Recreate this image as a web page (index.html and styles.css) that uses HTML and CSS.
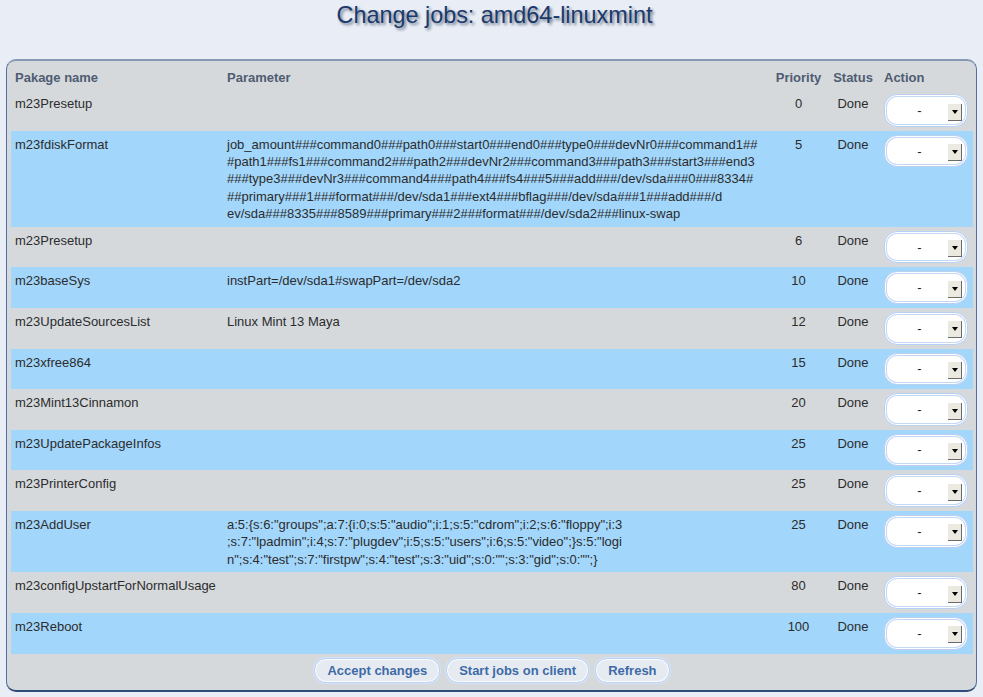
FILE: index.html
```html
<!DOCTYPE html>
<html>
<head>
<meta charset="utf-8">
<link rel="stylesheet" href="styles.css">
</head>
<body>
<h1 class="title">Change jobs: amd64-linuxmint</h1>
<div class="panel">
  <table class="jobs">
    <colgroup>
      <col class="c-name"><col class="c-param"><col class="c-prio"><col class="c-status"><col class="c-action">
    </colgroup>
    <thead>
      <tr><th class="left">Pakage name</th><th class="left">Parameter</th><th>Priority</th><th>Status</th><th class="left">Action</th></tr>
    </thead>
    <tbody>
      <tr class="gray"><td>m23Presetup</td><td class="param"></td><td class="num">0</td><td class="num">Done</td><td><div class="sel"><span class="sel-val">-</span><span class="sel-btn"><span class="tri"></span></span></div></td></tr>
      <tr class="blue"><td>m23fdiskFormat</td><td class="param">job_amount###command0###path0###start0###end0###type0###devNr0###command1##<br>#path1###fs1###command2###path2###devNr2###command3###path3###start3###end3<br>###type3###devNr3###command4###path4###fs4###5###add###/dev/sda###0###8334#<br>##primary###1###format###/dev/sda1###ext4###bflag###/dev/sda###1###add###/d<br>ev/sda###8335###8589###primary###2###format###/dev/sda2###linux-swap</td><td class="num">5</td><td class="num">Done</td><td><div class="sel"><span class="sel-val">-</span><span class="sel-btn"><span class="tri"></span></span></div></td></tr>
      <tr class="gray"><td>m23Presetup</td><td class="param"></td><td class="num">6</td><td class="num">Done</td><td><div class="sel"><span class="sel-val">-</span><span class="sel-btn"><span class="tri"></span></span></div></td></tr>
      <tr class="blue"><td>m23baseSys</td><td class="param">instPart=/dev/sda1#swapPart=/dev/sda2</td><td class="num">10</td><td class="num">Done</td><td><div class="sel"><span class="sel-val">-</span><span class="sel-btn"><span class="tri"></span></span></div></td></tr>
      <tr class="gray"><td>m23UpdateSourcesList</td><td class="param">Linux Mint 13 Maya</td><td class="num">12</td><td class="num">Done</td><td><div class="sel"><span class="sel-val">-</span><span class="sel-btn"><span class="tri"></span></span></div></td></tr>
      <tr class="blue"><td>m23xfree864</td><td class="param"></td><td class="num">15</td><td class="num">Done</td><td><div class="sel"><span class="sel-val">-</span><span class="sel-btn"><span class="tri"></span></span></div></td></tr>
      <tr class="gray"><td>m23Mint13Cinnamon</td><td class="param"></td><td class="num">20</td><td class="num">Done</td><td><div class="sel"><span class="sel-val">-</span><span class="sel-btn"><span class="tri"></span></span></div></td></tr>
      <tr class="blue"><td>m23UpdatePackageInfos</td><td class="param"></td><td class="num">25</td><td class="num">Done</td><td><div class="sel"><span class="sel-val">-</span><span class="sel-btn"><span class="tri"></span></span></div></td></tr>
      <tr class="gray"><td>m23PrinterConfig</td><td class="param"></td><td class="num">25</td><td class="num">Done</td><td><div class="sel"><span class="sel-val">-</span><span class="sel-btn"><span class="tri"></span></span></div></td></tr>
      <tr class="blue"><td>m23AddUser</td><td class="param">a:5:{s:6:"groups";a:7:{i:0;s:5:"audio";i:1;s:5:"cdrom";i:2;s:6:"floppy";i:3<br>;s:7:"lpadmin";i:4;s:7:"plugdev";i:5;s:5:"users";i:6;s:5:"video";}s:5:"logi<br>n";s:4:"test";s:7:"firstpw";s:4:"test";s:3:"uid";s:0:"";s:3:"gid";s:0:"";}</td><td class="num">25</td><td class="num">Done</td><td><div class="sel"><span class="sel-val">-</span><span class="sel-btn"><span class="tri"></span></span></div></td></tr>
      <tr class="gray"><td>m23configUpstartForNormalUsage</td><td class="param"></td><td class="num">80</td><td class="num">Done</td><td><div class="sel"><span class="sel-val">-</span><span class="sel-btn"><span class="tri"></span></span></div></td></tr>
      <tr class="blue"><td>m23Reboot</td><td class="param"></td><td class="num">100</td><td class="num">Done</td><td><div class="sel"><span class="sel-val">-</span><span class="sel-btn"><span class="tri"></span></span></div></td></tr>
    </tbody>
  </table>
  <div class="buttons">
    <span class="btn">Accept changes</span>
    <span class="btn">Start jobs on client</span>
    <span class="btn">Refresh</span>
  </div>
</div>
</body>
</html>
```
FILE: styles.css
```css
html, body {
  margin: 0;
  padding: 0;
  background: #e9eef6;
  font-family: "Liberation Sans", Arial, sans-serif;
}
.title {
  margin: 0;
  padding-top: 2px;
  padding-left: 6px;
  height: 54px;
  box-sizing: border-box;
  text-align: center;
  font-size: 23.4px;
  font-weight: normal;
  line-height: 27px;
  color: #1b3a6b;
  text-shadow: 2px 2px 3px #6f7c8f;
}
.panel {
  margin: 0 6px;
  background: #d6d9dc;
  border: 1px solid #5270a0;
  border-top: 2px solid #8599b6;
  border-bottom: 2px solid #2f4b79;
  border-radius: 10px;
  padding: 4px 3px 7px 4px;
  height: 633px;
  box-sizing: border-box;
  margin-top: 5px;
}
.jobs {
  width: 962px;
  border-collapse: collapse;
  table-layout: fixed;
  font-size: 13px;
  line-height: 17.3px;
  color: #2c2c2c;
}
.c-name { width: 212px; }
.c-param { width: 548px; }
.c-prio { width: 55px; }
.c-status { width: 54px; }
.c-action { width: 93px; }
.jobs th {
  font-weight: bold;
  color: #4e5c72;
  padding: 4px 4px;
  text-align: center;
  white-space: nowrap;
}
.jobs th.left { text-align: left; }
.jobs td {
  padding: 4px 4px;
  vertical-align: top;
  white-space: nowrap;
}
.jobs td.num { text-align: center; padding-top: 5px; }
.jobs td:first-child { padding-top: 5px; }
.jobs td.param { padding-top: 5px; padding-bottom: 4.5px; }
.blue { background: #a2d6fb; }
.gray { background: #d6d9dc; }
.sel {
  display: flex;
  align-items: center;
  width: 84px;
  height: 32.6px;
  box-sizing: border-box;
  background: #fff;
  border: 1px solid #b9d0f3;
  border-radius: 13px;
  box-shadow: inset 0 0 0 1px #fff, inset 0 0 0 2px #c4d8f6;
  padding-right: 5px;
}
.sel-val {
  flex: 1;
  text-align: center;
  font-size: 13px;
  color: #222;
  padding-left: 6px;
}
.sel-btn {
  width: 14px;
  height: 17px;
  margin-top: 3px;
  box-sizing: border-box;
  background: #ece9e1;
  border-right: 1px solid #6b6b6b;
  border-bottom: 1px solid #6b6b6b;
  display: flex;
  align-items: center;
  justify-content: center;
}
.tri {
  width: 0;
  height: 0;
  border-left: 3.5px solid transparent;
  border-right: 3.5px solid transparent;
  border-top: 4px solid #000;
}
.buttons {
  display: flex;
  justify-content: center;
  gap: 6px;
  margin-top: 4px;
}
.btn {
  display: inline-block;
  height: 25px;
  box-sizing: border-box;
  padding: 0 12px;
  line-height: 23px;
  font-size: 13px;
  font-weight: bold;
  color: #3e6aa6;
  background: #e6ebf2;
  border: 1px solid #bcd2f2;
  border-radius: 12px;
  box-shadow: inset 0 0 0 1px #fbfdff, 0 0 0 1px #d3e2f8;
}
```
